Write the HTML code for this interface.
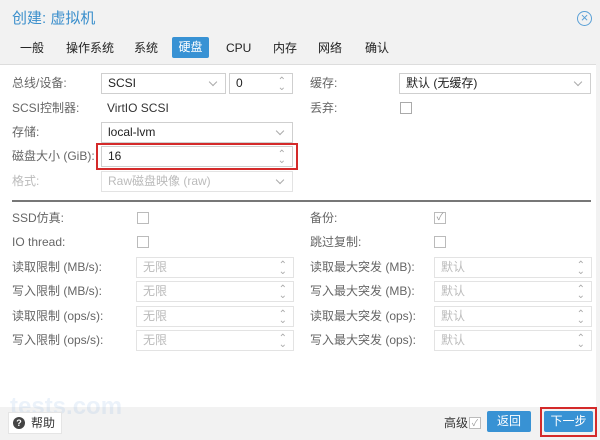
<!DOCTYPE html><html><head><meta charset="utf-8"><style>
*{box-sizing:border-box;margin:0;padding:0}
body{width:600px;height:440px;background:#f2f2f2;font-family:"Liberation Sans","Noto Sans CJK SC",sans-serif;font-size:12px;color:#333;position:relative;overflow:hidden}
.a{position:absolute;white-space:nowrap;line-height:16px}
.lbl{color:#666}
.in{position:absolute;border:1px solid #cfcfcf;background:#fff;height:21px;padding-left:6px;line-height:19px;color:#222}
.dis{color:#bbb;border-color:#e3e3e3}
.dd::after{content:"";position:absolute;right:9px;top:5px;width:5px;height:5px;border-right:1px solid #aaa;border-bottom:1px solid #aaa;transform:rotate(45deg)}
.sp::after{content:"⌃";position:absolute;right:6px;top:-2px;color:#aaa;font-size:10px}
.sp::before{content:"⌄";position:absolute;right:6px;top:4px;color:#aaa;font-size:10px}
.cb{position:absolute;width:12px;height:12px;border:1px solid #aaa;background:#fff}
.tab{position:absolute;top:40px;font-size:12px;color:#222;line-height:16px}
.btn{position:absolute;background:#3892d4;color:#fff;text-align:center;line-height:21px;height:21px;border-radius:2px}
</style></head><body>
<div class="a" style="left:0;top:64px;width:596px;height:343px;background:#fff;border-top:1px solid #ddd"></div>
<div class="a" style="left:12px;top:10px;font-size:15px;line-height:18px;color:#3b8fcc">创建: 虚拟机</div>
<div class="a" style="left:577px;top:11px;width:15px;height:15px;border:1px solid #5aa0d6;border-radius:50%;color:#5aa0d6;font-size:13px;line-height:12px;text-align:center">×</div>
<div class="tab" style="left:20px">一般</div>
<div class="tab" style="left:66px">操作系统</div>
<div class="tab" style="left:134px">系统</div>
<div class="a" style="left:172px;top:37px;width:37px;height:21px;background:#3892d4;color:#fff;text-align:center;line-height:21px;border-radius:2px">硬盘</div>
<div class="tab" style="left:226px">CPU</div>
<div class="tab" style="left:273px">内存</div>
<div class="tab" style="left:318px">网络</div>
<div class="tab" style="left:365px">确认</div>

<div class="a lbl" style="left:12px;top:75px">总线/设备:</div>
<div class="in dd" style="left:101px;top:73px;width:125px">SCSI</div>
<div class="in sp" style="left:229px;top:73px;width:64px">0</div>
<div class="a lbl" style="left:310px;top:75px">缓存:</div>
<div class="in dd" style="left:399px;top:73px;width:192px">默认 (无缓存)</div>
<div class="a lbl" style="left:12px;top:100px">SCSI控制器:</div>
<div class="a" style="left:107px;top:100px">VirtIO SCSI</div>
<div class="a lbl" style="left:310px;top:100px">丢弃:</div>
<div class="cb" style="left:400px;top:102px"></div>
<div class="a lbl" style="left:12px;top:124px">存储:</div>
<div class="in dd" style="left:101px;top:122px;width:192px">local-lvm</div>
<div class="a lbl" style="left:12px;top:148px">磁盘大小 (GiB):</div>
<div class="in sp" style="left:101px;top:146px;width:192px">16</div>
<div class="a" style="left:96px;top:143px;width:202px;height:27px;border:2px solid #d42a2a"></div>
<div class="a" style="left:12px;top:173px;color:#bbb">格式:</div>
<div class="in dd dis" style="left:101px;top:171px;width:192px">Raw磁盘映像 (raw)</div>
<div class="a" style="left:12px;top:200px;width:579px;height:2px;background:#777"></div>

<div class="a lbl" style="left:12px;top:210px">SSD仿真:</div><div class="cb" style="left:137px;top:212px;border-color:#bbb"></div>
<div class="a lbl" style="left:310px;top:210px">备份:</div><div class="cb" style="left:434px;top:212px;border-color:#bbb;color:#999;font-size:10px;line-height:10px;text-align:center">✓</div>
<div class="a lbl" style="left:12px;top:234px">IO thread:</div><div class="cb" style="left:137px;top:236px;border-color:#bbb"></div>
<div class="a lbl" style="left:310px;top:234px">跳过复制:</div><div class="cb" style="left:434px;top:236px;border-color:#bbb"></div>

<div class="a lbl" style="left:12px;top:259px">读取限制 (MB/s):</div><div class="in sp dis" style="left:136px;top:257px;width:158px">无限</div>
<div class="a lbl" style="left:310px;top:259px">读取最大突发 (MB):</div><div class="in sp dis" style="left:434px;top:257px;width:158px">默认</div>
<div class="a lbl" style="left:12px;top:283px">写入限制 (MB/s):</div><div class="in sp dis" style="left:136px;top:281px;width:158px">无限</div>
<div class="a lbl" style="left:310px;top:283px">写入最大突发 (MB):</div><div class="in sp dis" style="left:434px;top:281px;width:158px">默认</div>
<div class="a lbl" style="left:12px;top:308px">读取限制 (ops/s):</div><div class="in sp dis" style="left:136px;top:306px;width:158px">无限</div>
<div class="a lbl" style="left:310px;top:308px">读取最大突发 (ops):</div><div class="in sp dis" style="left:434px;top:306px;width:158px">默认</div>
<div class="a lbl" style="left:12px;top:332px">写入限制 (ops/s):</div><div class="in sp dis" style="left:136px;top:330px;width:158px">无限</div>
<div class="a lbl" style="left:310px;top:332px">写入最大突发 (ops):</div><div class="in sp dis" style="left:434px;top:330px;width:158px">默认</div>

<div class="a" style="left:10px;top:393px;font-size:24px;line-height:28px;font-weight:bold;color:rgba(120,170,220,.15)">tests.com</div>
<div class="a" style="left:8px;top:412px;width:54px;height:22px;background:#fff;border:1px solid #e5e5e5"></div>
<div class="a" style="left:13px;top:417px;width:12px;height:12px;border-radius:50%;background:#444;color:#fff;font-size:9px;line-height:12px;text-align:center;font-weight:bold">?</div>
<div class="a" style="left:31px;top:415px;color:#333">帮助</div>
<div class="a" style="left:444px;top:415px;color:#333">高级</div>
<div class="cb" style="left:469px;top:417px;border-color:#bbb;color:#999;font-size:9px;line-height:10px;text-align:center">✓</div>
<div class="btn" style="left:487px;top:411px;width:44px">返回</div>
<div class="btn" style="left:544px;top:411px;width:49px">下一步</div>
<div class="a" style="left:540px;top:407px;width:57px;height:30px;border:2px solid #d42a2a"></div>
</body></html>
